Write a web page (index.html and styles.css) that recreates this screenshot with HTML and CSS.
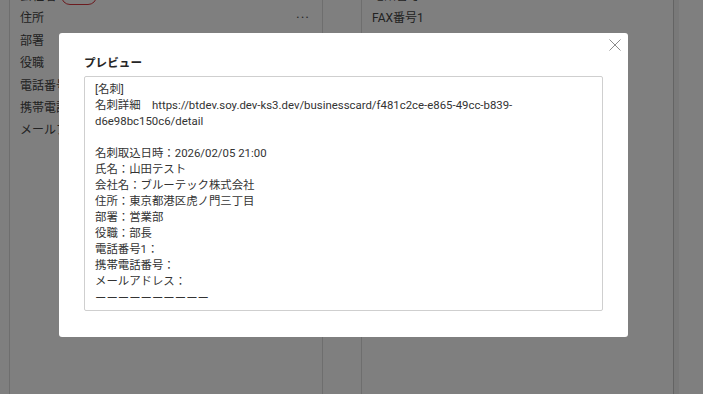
FILE: index.html
```html
<!DOCTYPE html>
<html lang="ja">
<head>
    <meta charset="utf-8" />
    <title>プレビュー</title>
    <link rel="stylesheet" href="styles.css">
</head>
<body>
    <div class="page">
        <div class="panel panel-left">
            <ul class="fields">
                <li class="field">会社名 <span class="badge">必須</span></li>
                <li class="field">住所 <span class="more">&middot;&middot;&middot;</span></li>
                <li class="field">部署</li>
                <li class="field">役職</li>
                <li class="field">電話番号1</li>
                <li class="field">携帯電話番号</li>
                <li class="field">メールアドレス</li>
            </ul>
        </div>
        <div class="panel panel-right">
            <ul class="fields">
                <li class="field">電話番号2</li>
                <li class="field">FAX番号1</li>
            </ul>
        </div>
        <div class="scrollbar"></div>
    </div>

    <div class="overlay">
        <div class="modal">
            <button class="close" aria-label="閉じる">
                <svg width="12" height="12" viewBox="0 0 12 12"><path d="M0.5 0.5L11.5 11.5M11.5 0.5L0.5 11.5" stroke="#8c8c8c" stroke-width="1" fill="none"/></svg>
            </button>
            <h2 class="title">プレビュー</h2>
            <div class="preview">[名刺]
名刺詳細　https://btdev.soy.dev-ks3.dev/businesscard/f481c2ce-e865-49cc-b839-d6e98bc150c6/detail

名刺取込日時：2026/02/05 21:00
氏名：山田テスト
会社名：ブルーテック株式会社
住所：東京都港区虎ノ門三丁目
部署：営業部
役職：部長
電話番号1：
携帯電話番号：
メールアドレス：
<span class="rule">ーーーーーーーーーー</span></div>
        </div>
    </div>
</body>
</html>
```

FILE: styles.css
```css
html, body{
    margin: 0;
    height: 100%;
    overflow: hidden;
}
body{
    background: #fff;
    font-family: Roboto, "Noto Sans CJK JP", sans-serif;
    color: #333;
}
.page{
    display: flex;
    height: 394px;
    padding-left: 9px;
}
.panel{
    border-left: 1px solid #dcdcdc;
    height: 100%;
}
.panel-left{
    width: 312px;
    border-right: 1px solid #dcdcdc;
    margin-right: 38px;
}
.panel-right{
    width: 311px;
    border-right: 1px solid #c8c8c8;
}
.scrollbar{
    width: 5px;
    background: #f2f2f2;
}
.fields{
    list-style: none;
    margin: -15px 0 0;
    padding: 0;
}
.field{
    height: 22.4px;
    line-height: 22.4px;
    font-size: 12px;
    padding-left: 10px;
    color: #444;
    display: flex;
    align-items: center;
}
.badge{
    margin-left: 5px;
    height: 16px;
    line-height: 16px;
    padding: 0 7px;
    border: 1px solid #d9363e;
    border-radius: 9px;
    font-size: 10px;
    color: #d9363e;
}
.more{
    margin-left: auto;
    margin-right: 12px;
    font-size: 14px;
    letter-spacing: 1px;
    color: #555;
}
.overlay{
    position: absolute;
    inset: 0;
    background: rgba(0, 0, 0, 0.5);
    padding: 33px 0 0 59px;
}
.modal{
    position: relative;
    width: 519px;
    background: #fff;
    border-radius: 3px;
    padding: 24px 25px 26px;
}
.close{
    position: absolute;
    top: 6px;
    right: 7px;
    width: 12px;
    height: 12px;
    padding: 0;
    border: 0;
    background: none;
    display: flex;
}
.title{
    margin: 0 0 7px;
    font-size: 11.6px;
    line-height: 12px;
    font-weight: bold;
    color: #262626;
}
.preview{
    border: 1px solid #cfcfcf;
    border-radius: 2px;
    padding: 4px 11px 4px 10px;
    font-size: 11.4px;
    line-height: 16px;
    color: #333;
    white-space: pre-wrap;
    overflow-wrap: break-word;
}
.rule{
    font-family: "Noto Sans CJK JP", sans-serif;
}
```
